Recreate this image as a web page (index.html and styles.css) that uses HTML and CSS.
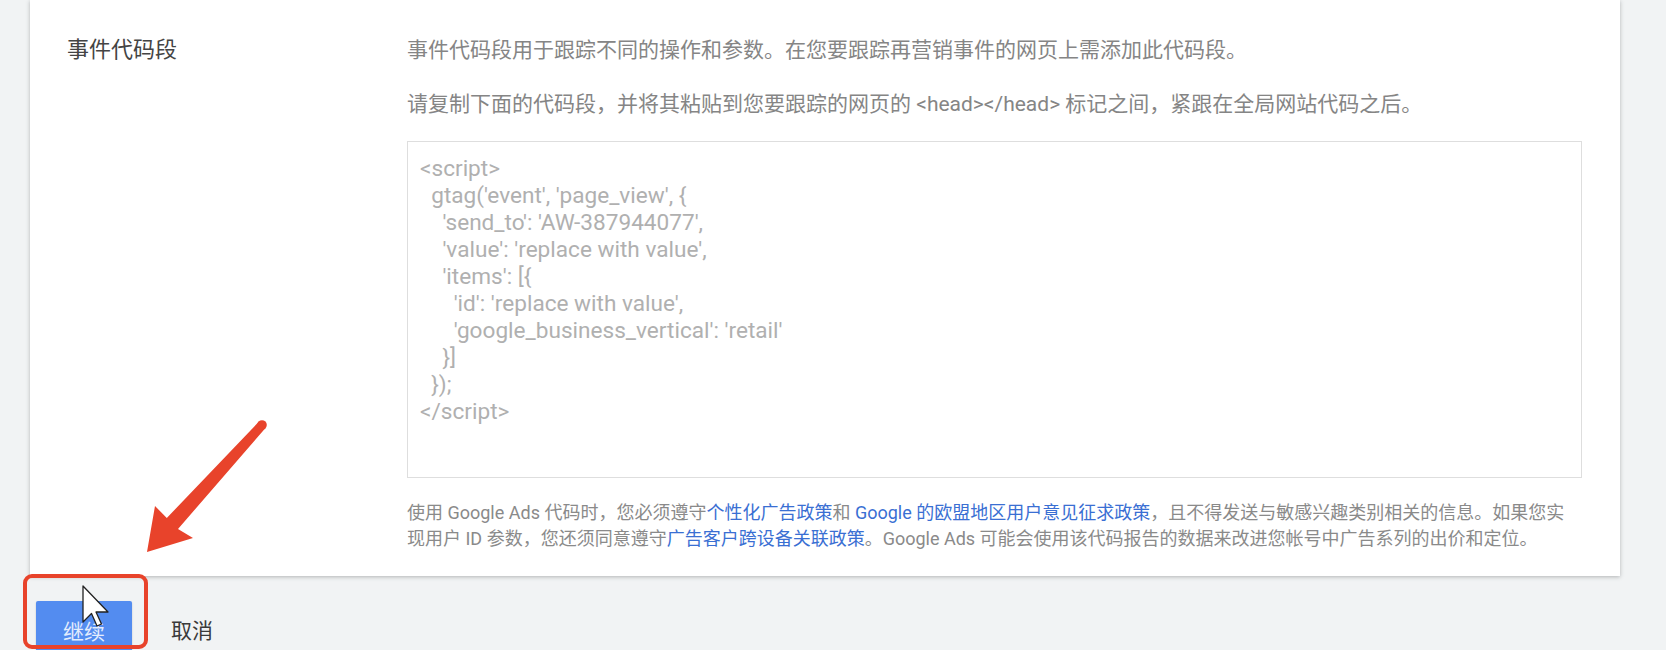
FILE: index.html
```html
<!DOCTYPE html>
<html lang="zh-CN">
<head>
    <meta charset="UTF-8">
    <meta name="viewport" content="width=device-width, initial-scale=1.0">
    <link rel="stylesheet" href="styles.css">
</head>
<body>

<div class="card">
    <div class="row">
        <div class="label">事件代码段</div>
        <div class="content">
            <p class="desc">事件代码段用于跟踪不同的操作和参数。在您要跟踪再营销事件的网页上需添加此代码段。</p>
            <p class="desc">请复制下面的代码段，并将其粘贴到您要跟踪的网页的 &lt;head&gt;&lt;/head&gt; 标记之间，紧跟在全局网站代码之后。</p>
<pre class="code">&lt;script&gt;
  gtag('event', 'page_view', {
    'send_to': 'AW-387944077',
    'value': 'replace with value',
    'items': [{
      'id': 'replace with value',
      'google_business_vertical': 'retail'
    }]
  });
&lt;/script&gt;</pre>
            <p class="note">使用 Google Ads 代码时，您必须遵守<a href="#">个性化广告政策</a>和 <a href="#">Google 的欧盟地区用户意见征求政策</a>，且不得发送与敏感兴趣类别相关的信息。如果您实<br>现用户 ID 参数，您还须同意遵守<a href="#">广告客户跨设备关联政策</a>。Google Ads 可能会使用该代码报告的数据来改进您帐号中广告系列的出价和定位。</p>
        </div>
    </div>
</div>

<div class="actions">
    <button class="btn-primary">继续</button>
    <button class="btn-text">取消</button>
</div>

<!-- annotation drawn over the screenshot -->
<div class="mark"></div>
<svg class="overlay" width="1666" height="650" viewBox="0 0 1666 650">
    <circle cx="262" cy="425" r="4.8" fill="#e8432b"/>
    <polygon fill="#e8432b" points="147,552 155,506 166.8,518 258.7,421.8 265.3,428.2 178,529 193,538"/>
    <path d="M83 586 L83 622 L91.5 613.5 L97 626 L101.5 624 L96 612 L108 612 Z" fill="#fff" stroke="#222" stroke-width="1.3" stroke-linejoin="round"/>
</svg>

</body>
</html>
```

FILE: styles.css
```css
body {
    margin: 0;
    width: 1666px;
    height: 650px;
    overflow: hidden;
    background: #f1f3f4;
    font-family: Roboto, "Noto Sans CJK SC", sans-serif;
    position: relative;
}

.card {
    margin-left: 30px;
    width: 1590px;
    height: 576px;
    box-sizing: border-box;
    background: #fff;
    box-shadow: 0 1px 4px rgba(60, 64, 67, 0.35);
    padding: 35px 38px 0 0;
}

.row {
    display: flex;
}

.label {
    width: 377px;
    box-sizing: border-box;
    padding-left: 37px;
    font-size: 22px;
    line-height: 30px;
    color: #444;
}

.content {
    width: 1175px;
}

.desc {
    margin: 0 0 24px;
    font-size: 21px;
    line-height: 30px;
    color: #858585;
}

.desc + .desc {
    margin-bottom: 22px;
}

.code {
    margin: 0;
    height: 337px;
    box-sizing: border-box;
    border: 1px solid #dedede;
    padding: 13px 12px;
    font-family: Roboto, sans-serif;
    font-size: 22.6px;
    line-height: 27px;
    color: #b0b0b0;
    white-space: pre;
}

.note {
    margin: 22px 0 0;
    font-size: 18px;
    line-height: 26px;
    color: #8a8a8a;
    white-space: nowrap;
}

.note a {
    color: #3a6fd3;
    text-decoration: none;
}

.actions {
    display: flex;
    align-items: flex-start;
    margin-top: 25px;
    padding-left: 36px;
    gap: 39px;
}

.btn-primary {
    width: 96px;
    height: 58px;
    border: none;
    border-radius: 2px;
    background: #538cf0;
    color: #e4edfd;
    font-family: inherit;
    font-size: 21px;
    padding: 0;
    box-shadow: 0 1px 2px rgba(0, 0, 0, 0.2);
}

.btn-text {
    border: none;
    background: none;
    padding: 0;
    margin-top: 13px;
    height: 30px;
    font-family: inherit;
    font-size: 21px;
    color: #3a3a3a;
}

.mark {
    position: absolute;
    left: 23px;
    top: 574px;
    width: 125px;
    height: 75px;
    box-sizing: border-box;
    border: 4px solid #e8432b;
    border-radius: 9px;
}

.overlay {
    position: absolute;
    left: 0;
    top: 0;
    pointer-events: none;
}
```
